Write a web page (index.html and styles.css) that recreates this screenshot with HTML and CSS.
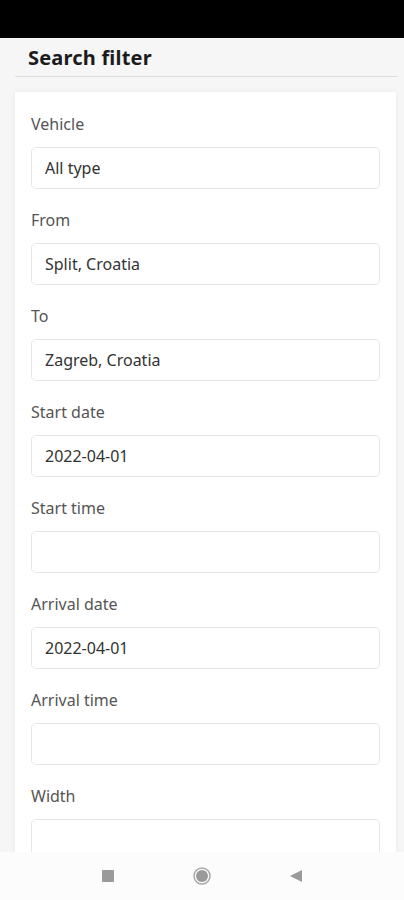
FILE: index.html
```html
<!DOCTYPE html>
<html>
<head>
<meta charset="utf-8">
<link rel="stylesheet" href="styles.css">
</head>
<body>
<div class="status"></div>
<div class="header"><h1 class="title">Search filter</h1></div>
<div class="card">
  <div class="field"><div class="label">Vehicle</div><div class="input">All type</div></div>
  <div class="field"><div class="label">From</div><div class="input">Split, Croatia</div></div>
  <div class="field"><div class="label">To</div><div class="input">Zagreb, Croatia</div></div>
  <div class="field"><div class="label">Start date</div><div class="input">2022-04-01</div></div>
  <div class="field"><div class="label">Start time</div><div class="input"></div></div>
  <div class="field"><div class="label">Arrival date</div><div class="input">2022-04-01</div></div>
  <div class="field"><div class="label">Arrival time</div><div class="input"></div></div>
  <div class="field"><div class="label">Width</div><div class="input"></div></div>
</div>
<div class="nav">
  <svg class="nav-icon" width="14" height="14" viewBox="0 0 14 14"><rect x="1" y="1" width="12" height="12" rx="1" fill="#9a9a9a"/></svg>
  <svg class="nav-icon" width="20" height="20" viewBox="0 0 20 20"><circle cx="10" cy="10" r="8" fill="none" stroke="#a8a8a8" stroke-width="1.5"/><circle cx="10" cy="10" r="6" fill="#9a9a9a"/></svg>
  <svg class="nav-icon" width="14" height="14" viewBox="0 0 14 14"><polygon points="1,7 13,1 13,13" fill="#9a9a9a"/></svg>
</div>
</body>
</html>
```
FILE: styles.css
```css
html, body {
  margin: 0;
  padding: 0;
}
body {
  background: #f6f6f7;
  font-family: "Noto Sans", "Open Sans", sans-serif;
  color: #333;
  height: 900px;
  overflow: hidden;
}
.status {
  height: 38px;
  background: #000;
}
.header {
  margin: 0 7px 0 15px;
  height: 38px;
  border-bottom: 1px solid #dcdde0;
  display: flex;
  align-items: center;
}
.title {
  margin: 2px 0 0 13px;
  font-size: 20px;
  font-weight: 700;
  color: #1c1c1c;
  line-height: 24px;
  letter-spacing: 0.2px;
}
.card {
  margin: 15px 8px 0 15px;
  background: #fff;
  padding: 20px 16px 0;
  box-shadow: 0 0 6px rgba(0,0,0,0.06);
}
.field {
  padding-bottom: 19px;
}
.label {
  font-size: 16px;
  line-height: 24px;
  color: #555;
  margin-bottom: 11px;
}
.input {
  height: 42px;
  box-sizing: border-box;
  border: 1px solid #e6e6e8;
  border-radius: 5px;
  padding: 0 13px;
  display: flex;
  align-items: center;
  font-size: 16px;
  color: #333;
}
.nav {
  position: fixed;
  left: 0;
  right: 0;
  bottom: 0;
  height: 48px;
  background: #fcfcfc;
  display: flex;
  align-items: center;
  gap: 77px;
  padding: 0 0 0 101px;
}
.nav-icon {
  display: block;
}
```
